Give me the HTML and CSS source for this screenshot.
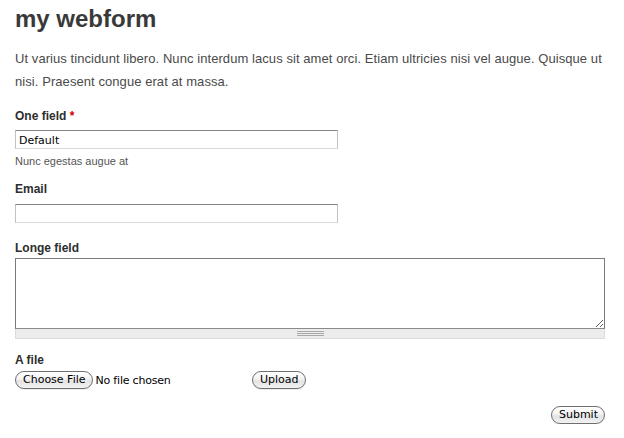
FILE: index.html
```html
<!DOCTYPE html>
<html lang="en">
<head>
<meta charset="utf-8">
<title>my webform</title>
<link rel="stylesheet" href="styles.css">
</head>
<body>
<div class="page">
  <h1 class="title">my webform</h1>
  <p class="intro">Ut varius tincidunt libero. Nunc interdum lacus sit amet orci. Etiam ultricies nisi vel augue. Quisque ut nisi. Praesent congue erat at massa.</p>
  <form class="webform">
    <div class="form-item item-one">
      <label class="field-label" for="f1">One field <span class="req">*</span></label>
      <input class="text-input" id="f1" type="text" value="Default">
      <div class="description">Nunc egestas augue at</div>
    </div>
    <div class="form-item item-email">
      <label class="field-label" for="f2">Email</label>
      <input class="text-input" id="f2" type="text">
    </div>
    <div class="form-item item-long">
      <label class="field-label" for="f3">Longe field</label>
      <div class="textarea-wrap">
        <textarea class="long-input" id="f3"></textarea>
        <div class="grippie"></div>
      </div>
    </div>
    <div class="form-item item-file">
      <label class="field-label" for="f4">A file</label>
      <div class="file-row">
        <span class="file-input"><span class="btn">Choose File</span><span class="file-status">No file chosen</span></span>
        <button class="btn" type="button">Upload</button>
      </div>
    </div>
    <div class="form-actions">
      <button class="btn" type="submit">Submit</button>
    </div>
  </form>
</div>
</body>
</html>
```

FILE: styles.css
```css
html, body {
  margin: 0;
  padding: 0;
  background: #fff;
}

.page {
  padding: 5px 19px 0 15px;
  font-family: "Liberation Sans", Arial, Helvetica, sans-serif;
  color: #494949;
}

.title {
  margin: 0;
  font-size: 24px;
  line-height: 28px;
  font-weight: bold;
  color: #393939;
}

.intro {
  margin: 14px 0 0;
  font-size: 13px;
  line-height: 23px;
  letter-spacing: 0.07px;
  color: #4a4a4a;
}

.webform {
  margin: 0;
}

.form-item {
  display: flex;
  flex-direction: column;
  align-items: flex-start;
}

.item-one { margin-top: 15px; }
.item-email { margin-top: 13px; }
.item-long { margin-top: 17px; }
.item-file { margin-top: 13px; }

.field-label {
  display: block;
  font-size: 12px;
  line-height: 16px;
  font-weight: bold;
  color: #2e2e2e;
}

.req {
  color: #cc0000;
}

.text-input {
  box-sizing: border-box;
  width: 323px;
  height: 19px;
  margin: 6px 0 0;
  padding: 1px 3px 0;
  border: 1px solid;
  border-color: #848484 #c1c1c1 #dadada #c1c1c1;
  font-family: "DejaVu Sans", "Lucida Grande", sans-serif;
  font-size: 11px;
  color: #000;
  background: #fff;
  outline: none;
}

.item-email .text-input {
  margin-top: 7px;
}

.description {
  margin-top: 5px;
  font-size: 11px;
  line-height: 14px;
  color: #555;
}

.textarea-wrap {
  margin-top: 2px;
  width: 590px;
  display: flex;
  flex-direction: column;
}

.long-input {
  box-sizing: border-box;
  display: block;
  width: 590px;
  height: 71px;
  margin: 0;
  padding: 2px;
  border: 1px solid #7a7a7a;
  border-bottom-color: #8a8a8a;
  font-family: "DejaVu Sans", sans-serif;
  font-size: 11px;
  resize: vertical;
  outline: none;
}

.grippie {
  box-sizing: border-box;
  height: 10px;
  background: #ececec;
  border: 1px solid #dcdcdc;
  border-top: 0;
  display: flex;
  justify-content: center;
  padding-top: 2px;
}

.grippie::after {
  content: "";
  width: 27px;
  height: 5px;
  background: repeating-linear-gradient(to bottom, #a9a9a9 0 1px, #ececec 1px 2px);
}

.file-row {
  margin-top: 3px;
  display: flex;
  align-items: center;
}

.file-input {
  width: 237px;
  display: flex;
  align-items: center;
}

.file-status {
  margin-left: 3px;
  font-family: "DejaVu Sans", "Lucida Grande", sans-serif;
  font-size: 11px;
  letter-spacing: -0.2px;
  color: #000;
}

.btn {
  box-sizing: border-box;
  display: inline-flex;
  align-items: center;
  justify-content: center;
  height: 18px;
  margin: 0;
  padding: 0 6px 0 7px;
  border: 1px solid #6f6f6f;
  border-radius: 9px;
  background: linear-gradient(to bottom, #ffffff 0%, #f3f3f3 45%, #e3e3e3 55%, #f2f2f2 100%);
  font-family: "DejaVu Sans", "Lucida Grande", sans-serif;
  font-size: 11px;
  line-height: 16px;
  color: #000;
  box-shadow: 0 1px 0 rgba(0,0,0,0.08);
}

.form-actions {
  margin-top: 17px;
  display: flex;
  justify-content: flex-end;
}
```
